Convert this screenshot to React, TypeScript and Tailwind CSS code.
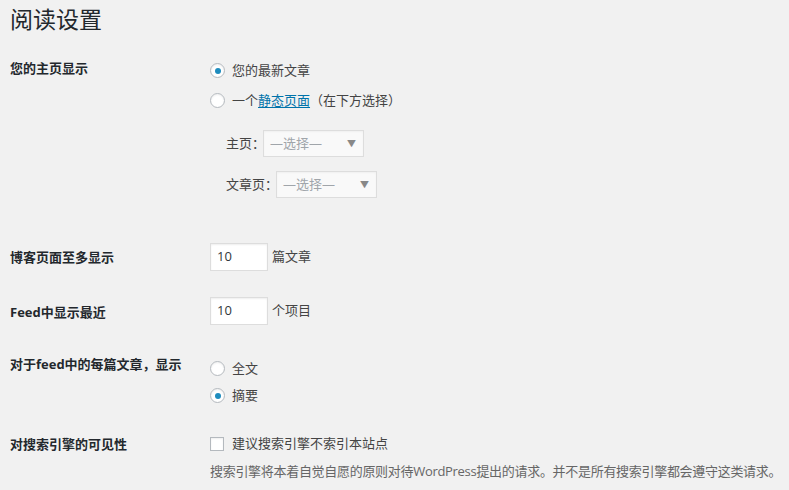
import React from "react";

const font = { fontFamily: '"Open Sans", "Noto Sans CJK SC", sans-serif' };

function Radio({ checked, children }: { checked?: boolean; children: React.ReactNode }) {
  return (
    <label className="flex items-center h-[27px] text-[13px] text-[#444]">
      <span className="w-[15px] h-[15px] rounded-full border border-[#b4b9be] bg-white shadow-[inset_0_1px_2px_rgba(0,0,0,0.07)] flex items-center justify-center mr-[7px]">
        {checked && <span className="w-[6px] h-[6px] rounded-full bg-[#1e8cbe]" />}
      </span>
      {children}
    </label>
  );
}

function Select({ width }: { width: string }) {
  return (
    <div
      className={`${width} shrink-0 h-[27px] border border-[#ddd] bg-[#f9f9f9] shadow-[inset_0_1px_2px_rgba(0,0,0,0.04)] flex items-center justify-between pl-[6px] pr-[7px] text-[13px] text-[#a0a5aa]`}
    >
      <span>—选择—</span>
      <span className="text-[9px] text-[#888]">▼</span>
    </div>
  );
}

function NumberInput() {
  return (
    <div className="w-[58px] h-[28px] shrink-0 border border-[#ddd] bg-white shadow-[inset_0_1px_2px_rgba(0,0,0,0.07)] flex items-center pl-[6px] text-[13px] text-[#32373c]">
      10
    </div>
  );
}

export default function App() {
  return (
    <div className="min-h-[490px] w-[789px] bg-[#f1f1f1] pl-[10px] overflow-hidden" style={font}>
      <h1 className="text-[23px] leading-[29px] font-normal text-[#23282d] pt-[5px]">阅读设置</h1>

      {/* 主页显示 */}
      <div className="flex mt-[21px]">
        <div className="w-[200px] shrink-0 pt-[4px] text-[13px] leading-[18px] font-bold text-[#23282d]">您的主页显示</div>
        <div className="pt-[2px]">
          <div className="flex flex-col gap-[3px]">
            <Radio checked>您的最新文章</Radio>
            <Radio>
              一个
              <span className="text-[#0073aa] underline underline-offset-2">静态页面</span>
              （在下方选择）
            </Radio>
          </div>
          <div className="ml-[16px] mt-[16px] flex items-center text-[13px] text-[#444] whitespace-nowrap">
            <span className="w-[37px] shrink-0">主页：</span>
            <Select width="w-[101px]" />
          </div>
          <div className="ml-[16px] mt-[14px] flex items-center text-[13px] text-[#444] whitespace-nowrap">
            <span className="w-[50px] shrink-0">文章页：</span>
            <Select width="w-[101px]" />
          </div>
        </div>
      </div>

      {/* 博客页面 */}
      <div className="flex mt-[45px] items-center">
        <div className="w-[200px] shrink-0 text-[13px] leading-[18px] font-bold text-[#23282d]">博客页面至多显示</div>
        <NumberInput />
        <span className="ml-[4px] text-[13px] text-[#444]">篇文章</span>
      </div>

      {/* Feed */}
      <div className="flex mt-[26px] items-center">
        <div className="w-[200px] shrink-0 text-[13px] leading-[18px] font-bold text-[#23282d] pt-[1px]">Feed中显示最近</div>
        <NumberInput />
        <span className="ml-[4px] text-[13px] text-[#444]">个项目</span>
      </div>

      {/* 每篇文章显示 */}
      <div className="flex mt-[29px]">
        <div className="w-[200px] shrink-0 text-[13px] leading-[18px] font-bold text-[#23282d] pt-[1px]">对于feed中的每篇文章，显示</div>
        <div className="flex flex-col pt-[1px]">
          <Radio>全文</Radio>
          <Radio checked>摘要</Radio>
        </div>
      </div>

      {/* 搜索引擎 */}
      <div className="flex mt-[23px]">
        <div className="w-[200px] shrink-0 text-[13px] leading-[18px] font-bold text-[#23282d] pt-[3px]">对搜索引擎的可见性</div>
        <div>
          <label className="flex items-center h-[24px] text-[13px] text-[#444]">
            <span className="w-[14px] h-[14px] border border-[#b4b9be] bg-white shadow-[inset_0_1px_2px_rgba(0,0,0,0.07)] mr-[8px]" />
            建议搜索引擎不索引本站点
          </label>
          <p className="mt-[6px] text-[13px] text-[#666] whitespace-nowrap tracking-[-0.3px]">
            搜索引擎将本着自觉自愿的原则对待WordPress提出的请求。并不是所有搜索引擎都会遵守这类请求。
          </p>
        </div>
      </div>
    </div>
  );
}
